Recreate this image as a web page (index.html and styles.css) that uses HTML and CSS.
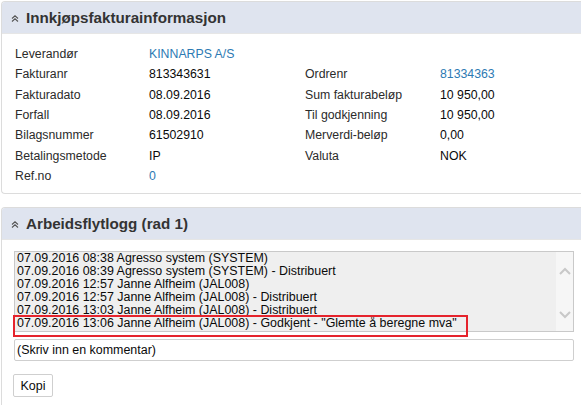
FILE: index.html
```html
<!DOCTYPE html>
<html lang="no">
<head>
<meta charset="utf-8">
<title>Innkjøpsfakturainformasjon</title>
<link rel="stylesheet" href="styles.css">
</head>
<body>
<div class="page">
  <section class="panel panel-info">
    <header class="panel-head">
      <svg class="chev" width="8" height="7" viewBox="0 0 8 7"><path d="M1 3.5 L4 0.8 L7 3.5 M1 6.5 L4 3.8 L7 6.5" fill="none" stroke="#555" stroke-width="1.1"/></svg>
      <h2>Innkjøpsfakturainformasjon</h2>
    </header>
    <div class="panel-body info-body">
      <div class="grid">
        <span class="lbl">Leverandør</span><span class="val link">KINNARPS A/S</span><span></span><span></span>
        <span class="lbl">Fakturanr</span><span class="val">813343631</span><span class="lbl">Ordrenr</span><span class="val link">81334363</span>
        <span class="lbl">Fakturadato</span><span class="val">08.09.2016</span><span class="lbl">Sum fakturabeløp</span><span class="val">10 950,00</span>
        <span class="lbl">Forfall</span><span class="val">08.09.2016</span><span class="lbl">Til godkjenning</span><span class="val">10 950,00</span>
        <span class="lbl">Bilagsnummer</span><span class="val">61502910</span><span class="lbl">Merverdi-beløp</span><span class="val">0,00</span>
        <span class="lbl">Betalingsmetode</span><span class="val">IP</span><span class="lbl">Valuta</span><span class="val">NOK</span>
        <span class="lbl">Ref.no</span><span class="val link">0</span><span></span><span></span>
      </div>
    </div>
  </section>

  <section class="panel panel-log">
    <header class="panel-head">
      <svg class="chev" width="8" height="7" viewBox="0 0 8 7"><path d="M1 3.5 L4 0.8 L7 3.5 M1 6.5 L4 3.8 L7 6.5" fill="none" stroke="#555" stroke-width="1.1"/></svg>
      <h2>Arbeidsflytlogg (rad 1)</h2>
    </header>
    <div class="panel-body log-body">
      <div class="listwrap">
        <div class="listbox">
          <div class="lines">
            <div>07.09.2016 08:38 Agresso system (SYSTEM)</div>
            <div>07.09.2016 08:39 Agresso system (SYSTEM) - Distribuert</div>
            <div>07.09.2016 12:57 Janne Alfheim (JAL008)</div>
            <div>07.09.2016 12:57 Janne Alfheim (JAL008) - Distribuert</div>
            <div>07.09.2016 13:03 Janne Alfheim (JAL008) - Distribuert</div>
            <div>07.09.2016 13:06 Janne Alfheim (JAL008) - Godkjent - "Glemte å beregne mva"</div>
          </div>
          <div class="scroll">
            <svg width="12" height="8" viewBox="0 0 12 8"><path d="M1 7 L6 2 L11 7" fill="none" stroke="#c8c8c8" stroke-width="2"/></svg>
            <svg width="12" height="8" viewBox="0 0 12 8"><path d="M1 1 L6 6 L11 1" fill="none" stroke="#c8c8c8" stroke-width="2"/></svg>
          </div>
        </div>
        <div class="highlight"></div>
      </div>
      <div class="comment">(Skriv inn en kommentar)</div>
      <button class="btn" type="button">Kopi</button>
    </div>
  </section>
</div>
</body>
</html>
```
FILE: styles.css
```css
html, body {
  margin: 0;
  padding: 0;
  background: #fff;
  overflow: hidden;
}
body {
  font-family: "Liberation Sans", Arial, sans-serif;
  color: #222;
}
.page {
  padding: 1px 0 0 1px;
}
.panel {
  border: 1px solid #dcdcdc;
  border-right: none;
  border-radius: 4px 0 0 4px;
  overflow: hidden;
}
.panel-log {
  margin-top: 13px;
  border-bottom: none;
  border-radius: 4px 0 0 0;
}
.panel-head {
  height: 31px;
  background: #dfe4ef;
  display: flex;
  align-items: center;
  padding-left: 9px;
  gap: 7px;
}
.panel-head h2 {
  margin: 0;
  font-size: 15.2px;
  font-weight: bold;
  color: #333;
  line-height: 31px;
}
.chev {
  margin-top: 2px;
}
.info-body {
  padding: 10px 0 7px 13px;
  border-top: 1px solid #e6e6e6;
}
.grid {
  display: grid;
  grid-template-columns: 134px 156px 135px 140px;
  grid-auto-rows: 20.3px;
  align-items: center;
  font-size: 12.3px;
}
.lbl {
  color: #2b2b2b;
}
.val {
  color: #0a0a0a;
}
.link {
  color: #2d7ab3;
}
.log-body {
  padding: 11px 0 20px 12px;
  border-top: 1px solid #e6e6e6;
}
.listwrap {
  position: relative;
  width: 560px;
}
.listbox {
  display: flex;
  height: 79px;
  border: 1px solid #c9c9c9;
  background: #efefef;
}
.lines {
  flex: 1;
  padding: 0 0 0 2px;
  font-size: 12.45px;
  line-height: 13px;
  color: #0a0a0a;
  white-space: nowrap;
}
.scroll {
  width: 17px;
  background: #f6f6f6;
  display: flex;
  flex-direction: column;
  align-items: center;
  justify-content: space-between;
  padding: 15px 0 12px;
  box-sizing: border-box;
}
.highlight {
  position: absolute;
  left: -1px;
  top: 64px;
  width: 451px;
  height: 18px;
  border: 2px solid #e5232c;
}
.comment {
  margin-top: 7px;
  width: 556px;
  height: 20px;
  border: 1px solid #cfcfcf;
  border-radius: 2px;
  padding-left: 2px;
  font-size: 12.45px;
  line-height: 20px;
  color: #0a0a0a;
}
.btn {
  display: block;
  margin-top: 13px;
  margin-left: -1px;
  width: 40px;
  height: 23px;
  border: 1px solid #cfcfcf;
  border-radius: 2px;
  background: #fff;
  font-family: "Liberation Sans", Arial, sans-serif;
  font-size: 12.5px;
  color: #0a0a0a;
  padding: 0;
}
```
